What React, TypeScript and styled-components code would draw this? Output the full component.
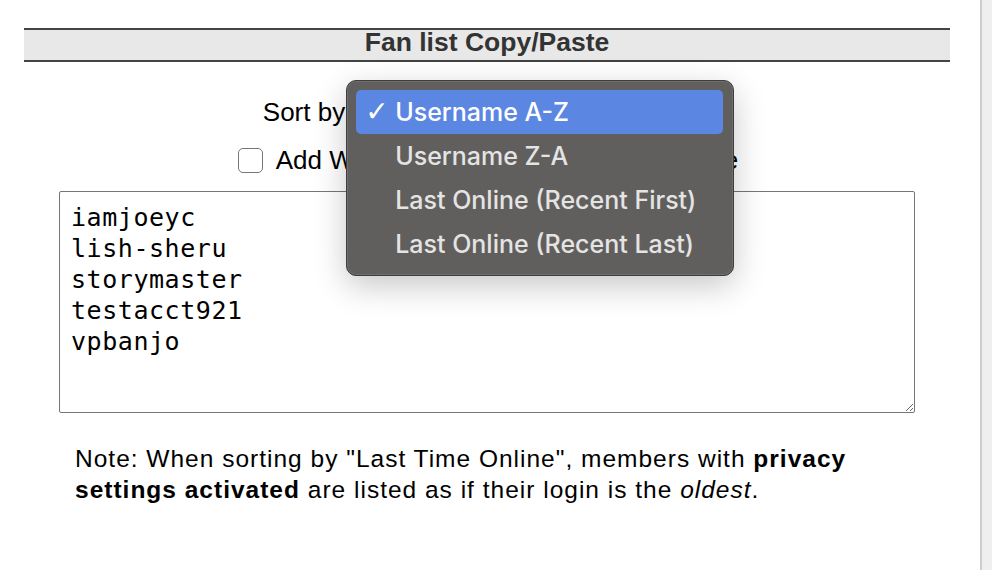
import styled, { createGlobalStyle } from "styled-components";

const GlobalStyle = createGlobalStyle`
  html, body {
    margin: 0;
    padding: 0;
    background: #fff;
    font-family: "Liberation Sans", Arial, sans-serif;
  }
`;

const Page = styled.div`
  display: flex;
  min-height: 570px;
`;

const Main = styled.main`
  flex: 1;
  padding: 28px 30px 0 24px;
`;

const ScrollTrack = styled.div`
  width: 10px;
  border-left: 2px solid #cdcdcd;
  background: #efefef;
`;

const Header = styled.h2`
  margin: 0;
  height: 30px;
  box-sizing: content-box;
  border-top: 2px solid #444;
  border-bottom: 2px solid #444;
  background: #e8e8e8;
  color: #333;
  font-size: 26.5px;
  font-weight: bold;
  line-height: 24px;
  text-align: center;
`;

const Controls = styled.div`
  display: flex;
  flex-direction: column;
  align-items: center;
`;

const SortRow = styled.div`
  display: flex;
  align-items: center;
  margin-top: 32px;
  height: 36px;
  font-size: 26px;
  line-height: 30px;
`;

const SelectWrap = styled.div`
  position: relative;
  margin-left: 6px;
  width: 360px;
  height: 36px;
`;

const SelectBox = styled.div`
  height: 36px;
  border: 1px solid #bbb;
  border-radius: 6px;
  background: #f4f4f4;
  box-sizing: border-box;
`;

const Menu = styled.ul`
  position: absolute;
  left: -5px;
  top: -14px;
  width: 388px;
  box-sizing: border-box;
  margin: 0;
  padding: 9px 10px 9px 9px;
  list-style: none;
  background: #615f5d;
  border: 1px solid #3e3d3c;
  border-radius: 10px;
  box-shadow: inset 0 0 0 1px rgba(255, 255, 255, 0.1),
    0 10px 32px rgba(0, 0, 0, 0.22);
  font-family: Inter, "Noto Sans", sans-serif;
  font-size: 25px;
  font-weight: 500;
  z-index: 10;
`;

const MenuItem = styled.li<{ $active?: boolean }>`
  display: flex;
  align-items: center;
  height: 44px;
  padding-left: 9px;
  border-radius: 5px;
  background: ${(p) => (p.$active ? "#5b87e2" : "transparent")};
  color: ${(p) => (p.$active ? "#fff" : "#e4e4e4")};
`;

const Check = styled.span`
  width: 30px;
  font-family: "DejaVu Sans", sans-serif;
  font-size: 28px;
  font-weight: bold;
`;

const CheckRow = styled.label`
  display: flex;
  align-items: center;
  margin-top: 15px;
  margin-left: 2px;
  height: 30px;
  font-size: 26px;
  line-height: 30px;
`;

const Checkbox = styled.input`
  appearance: none;
  width: 25px;
  height: 25px;
  margin: 0 13px 0 0;
  border: 1.5px solid #767676;
  border-radius: 5px;
  background: #fff;
`;

const ListBox = styled.textarea`
  display: block;
  width: 856px;
  height: 222px;
  box-sizing: border-box;
  margin: 16px 0 0 35px;
  padding: 10px 11px;
  border: 1px solid #767676;
  border-radius: 2px;
  font-family: "DejaVu Sans Mono", monospace;
  font-size: 25px;
  letter-spacing: 0.55px;
  line-height: 31px;
  color: #000;
  background: #fff;
  outline: none;
`;

const Note = styled.p`
  margin: 30px 16px 0 51px;
  font-size: 24.5px;
  letter-spacing: 1px;
  line-height: 31px;
  color: #000;
`;

const sortOptions = [
  "Username A-Z",
  "Username Z-A",
  "Last Online (Recent First)",
  "Last Online (Recent Last)",
];

const fans = ["iamjoeyc", "lish-sheru", "storymaster", "testacct921", "vpbanjo"];

export default function App() {
  const selected = 0;
  return (
    <Page>
      <GlobalStyle />
      <Main>
        <Header>Fan list Copy/Paste</Header>
        <Controls>
          <SortRow>
            Sort by
            <SelectWrap>
              <SelectBox />
              <Menu>
                {sortOptions.map((opt, i) => (
                  <MenuItem key={opt} $active={i === selected}>
                    <Check>{i === selected ? "✓" : ""}</Check>
                    {opt}
                  </MenuItem>
                ))}
              </Menu>
            </SelectWrap>
          </SortRow>
          <CheckRow>
            <Checkbox type="checkbox" />
            Add Wiki user profile links to each name
          </CheckRow>
        </Controls>
        <ListBox readOnly value={fans.join("\n")} />
        <Note>
          Note: When sorting by "Last Time Online", members with{" "}
          <b>privacy settings activated</b> are listed as if their login is the{" "}
          <i>oldest</i>.
        </Note>
      </Main>
      <ScrollTrack />
    </Page>
  );
}
